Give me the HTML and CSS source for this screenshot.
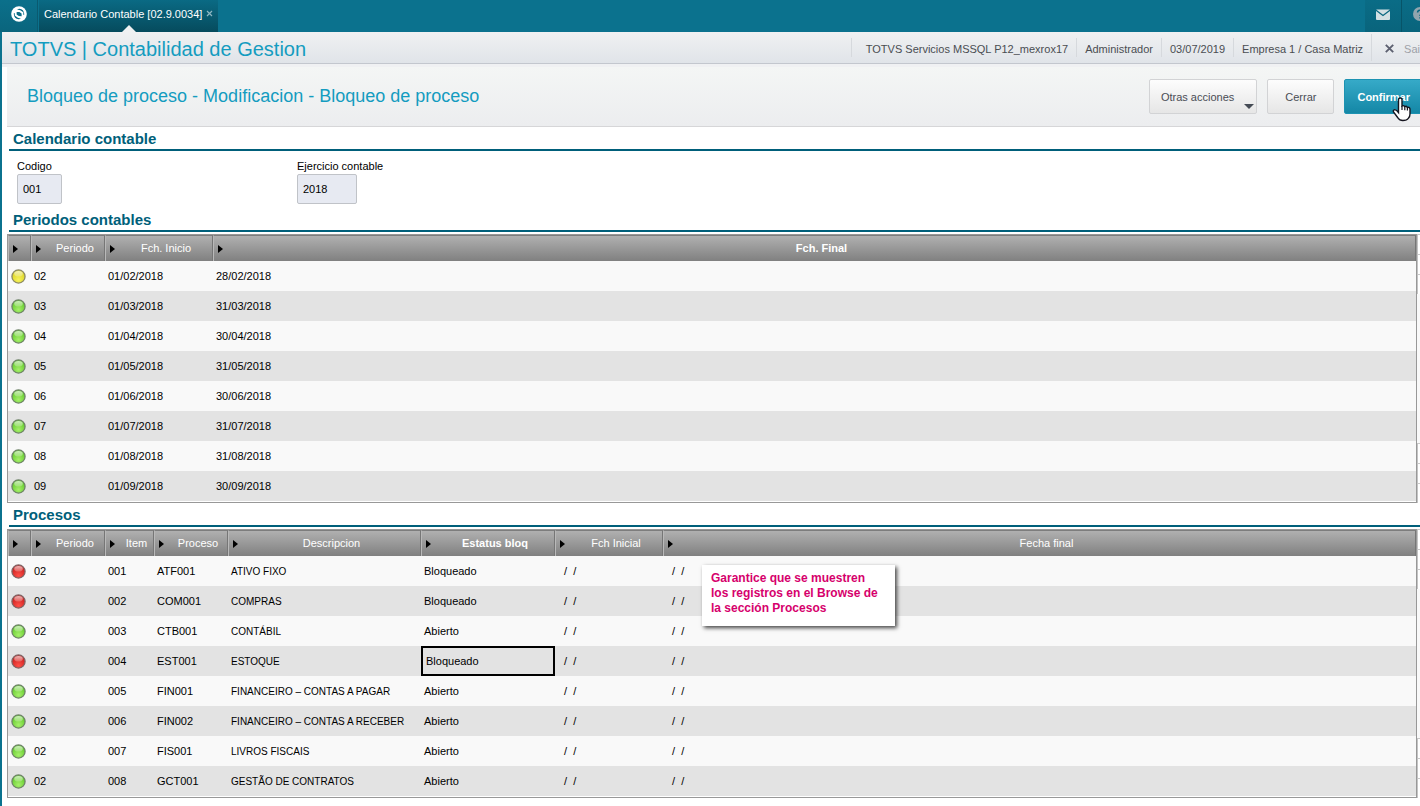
FILE: index.html
```html
<!DOCTYPE html>
<html lang="es">
<head>
<meta charset="utf-8">
<title>Calendario Contable</title>
<link rel="stylesheet" href="styles.css">
</head>
<body>
<svg class="defs" aria-hidden="true">
  <defs>
    <radialGradient id="g-green" cx="50%" cy="75%" r="70%"><stop offset="0" stop-color="#a6f06a"/><stop offset="1" stop-color="#5cc626"/></radialGradient>
    <radialGradient id="g-yellow" cx="50%" cy="75%" r="70%"><stop offset="0" stop-color="#f6f25c"/><stop offset="1" stop-color="#d8d01c"/></radialGradient>
    <radialGradient id="g-red" cx="50%" cy="80%" r="70%"><stop offset="0" stop-color="#ff5048"/><stop offset="1" stop-color="#c81c1c"/></radialGradient>
    <linearGradient id="g-shine" x1="0" y1="0" x2="0" y2="1"><stop offset="0" stop-color="#fff" stop-opacity=".7"/><stop offset="1" stop-color="#fff" stop-opacity=".2"/></linearGradient>
    <symbol id="green" viewBox="0 0 16 16"><circle cx="8" cy="8" r="7" fill="url(#g-green)" stroke="#6f8468" stroke-width="1.4"/><ellipse cx="8" cy="5" rx="4.6" ry="3" fill="url(#g-shine)"/></symbol>
    <symbol id="yellow" viewBox="0 0 16 16"><circle cx="8" cy="8" r="7" fill="url(#g-yellow)" stroke="#8c8a66" stroke-width="1.4"/><ellipse cx="8" cy="5" rx="4.6" ry="3" fill="url(#g-shine)"/></symbol>
    <symbol id="red" viewBox="0 0 16 16"><circle cx="8" cy="8" r="7" fill="url(#g-red)" stroke="#806464" stroke-width="1.4"/><ellipse cx="8" cy="5" rx="4.6" ry="3" fill="url(#g-shine)"/></symbol>
  </defs>
</svg>

<header class="topbar">
  <button class="home" aria-label="Inicio">
    <svg width="16" height="16" viewBox="0 0 16 16"><circle cx="8" cy="8" r="7.8" fill="#fff"/><path d="M8.200 2.700Q13 3 13.300 8.500L12.300 9V6.300L9.300 4.200 6 3.400ZM2.700 7.500 3.800 7V9.500L6.800 11.800 10 12.800 7.800 13.300Q3 13 2.700 7.500Z" fill="#0a6d87"/><path d="M5.600 5.900 8.400 6.100 10.600 7.600V10.200L7.800 10 5.600 8.500Z" fill="#0a6d87"/></svg>
  </button>
  <div class="tab"><span>Calendario Contable [02.9.0034]</span><button class="tab-close" aria-label="Cerrar pestaña"><svg width="7" height="7" viewBox="0 0 7 7"><path d="M1 1l5 5M6 1L1 6" stroke="#8fb6c2" stroke-width="1.2"/></svg></button></div>
  <div class="tools">
    <button class="tool" aria-label="Mensajes"><svg width="14" height="11" viewBox="0 0 14 11"><path d="M0 1.5Q0 .5 1 .5H13Q14 .5 14 1.5V10Q14 11 13 11H1Q0 11 0 10Z" fill="#d3dfe3"/><path d="M0 1.2 7 6.4 14 1.2" fill="none" stroke="#0a6780" stroke-width="1.3"/></svg></button>
    <button class="tool help" aria-label="Ayuda"><svg width="14" height="14" viewBox="0 0 14 14"><circle cx="7" cy="7" r="7" fill="#91a5ae"/><path d="M4.6 5.4a2.4 2.2 0 1 1 3.4 2Q7 7.8 7 9M7 10.2v1.4" fill="none" stroke="#0a6780" stroke-width="1.5"/></svg></button>
  </div>
</header>

<div class="page">
  <div class="infobar">
    <h1>TOTVS | Contabilidad de Gestion</h1>
    <ul class="session">
      <li class="server">TOTVS Servicios MSSQL P12_mexrox17</li>
      <li>Administrador</li>
      <li>03/07/2019</li>
      <li>Empresa 1 / Casa Matriz</li>
      <li class="exit"><button><svg width="9" height="9" viewBox="0 0 9 9"><path d="M.8.8l7.4 7.4M8.2.8L.8 8.2" stroke="#5d6070" stroke-width="1.9"/></svg>Sai</button></li>
    </ul>
  </div>

  <main>
    <div class="actionbar">
      <h2>Bloqueo de proceso - Modificacion - Bloqueo de proceso</h2>
      <div class="actions">
        <button class="btn more">Otras acciones<svg width="10" height="5" viewBox="0 0 10 5"><path d="M0 0H10L5 5Z" fill="#454b55"/></svg></button>
        <button class="btn">Cerrar</button>
        <button class="btn primary">Confirmar<svg class="cursor" width="20" height="26" viewBox="0 0 20 26"><path d="M6.5 15.5V3Q6.500 1 8.300 1T10 3V9Q11.500 8 12.800 9.600 14.300 8.800 15.300 10.400 18 9.900 18 12.500V17Q18 20 16.200 21.500 15 23.500 10.800 23.500 7.500 23.500 6 21L1.500 15Q.8 13 2.800 12.600 4.500 12.800 6.500 15.500Z" fill="#fff" stroke="#15151f" stroke-width="1.4"/><path d="M10 9v4M12.800 9.600v3.600M15.400 10.500v3" stroke="#15151f" stroke-width="1.2"/></svg></button>
      </div>
    </div>

    <section>
      <h3>Calendario contable</h3>
      <form class="fields">
        <div class="field"><label for="codigo">Codigo</label><input id="codigo" class="w-code" value="001" readonly></div>
        <div class="field"><label for="ejercicio">Ejercicio contable</label><input id="ejercicio" class="w-year" value="2018" readonly></div>
      </form>
    </section>

    <section>
      <h3>Periodos contables</h3>
      <div class="browse">
        <div class="frame">
          <table>
            <colgroup><col class="c-led"><col class="c-per"><col class="c-date"><col></colgroup>
            <thead><tr>
              <th><div class="head"></div></th><th><div class="head"><span>Periodo</span></div></th><th><div class="head"><span>Fch. Inicio</span></div></th><th><div class="head"><span class="strong">Fch. Final</span></div></th>
            </tr></thead>
            <tbody>
              <tr><td class="led"><svg><use href="#yellow"/></svg></td><td>02</td><td>01/02/2018</td><td>28/02/2018</td></tr>
              <tr><td class="led"><svg><use href="#green"/></svg></td><td>03</td><td>01/03/2018</td><td>31/03/2018</td></tr>
              <tr><td class="led"><svg><use href="#green"/></svg></td><td>04</td><td>01/04/2018</td><td>30/04/2018</td></tr>
              <tr><td class="led"><svg><use href="#green"/></svg></td><td>05</td><td>01/05/2018</td><td>31/05/2018</td></tr>
              <tr><td class="led"><svg><use href="#green"/></svg></td><td>06</td><td>01/06/2018</td><td>30/06/2018</td></tr>
              <tr><td class="led"><svg><use href="#green"/></svg></td><td>07</td><td>01/07/2018</td><td>31/07/2018</td></tr>
              <tr><td class="led"><svg><use href="#green"/></svg></td><td>08</td><td>01/08/2018</td><td>31/08/2018</td></tr>
              <tr><td class="led"><svg><use href="#green"/></svg></td><td>09</td><td>01/09/2018</td><td>30/09/2018</td></tr>
            </tbody>
          </table>
        </div>
        <div class="scroller"><i></i><i></i><i></i><b></b><i></i><i></i><i></i></div>
      </div>
    </section>

    <section>
      <h3>Procesos</h3>
      <div class="browse">
        <div class="frame">
          <table>
            <colgroup><col class="c-led"><col class="c-per"><col class="c-item"><col class="c-per"><col class="c-desc"><col class="c-stat"><col class="c-date"><col></colgroup>
            <thead><tr>
              <th><div class="head"></div></th><th><div class="head"><span>Periodo</span></div></th><th><div class="head"><span>Item</span></div></th><th><div class="head"><span>Proceso</span></div></th><th><div class="head"><span>Descripcion</span></div></th><th><div class="head"><span class="strong">Estatus bloq</span></div></th><th><div class="head"><span>Fch Inicial</span></div></th><th><div class="head"><span>Fecha final</span></div></th>
            </tr></thead>
            <tbody>
              <tr><td class="led"><svg><use href="#red"/></svg></td><td>02</td><td>001</td><td>ATF001</td><td class="desc">ATIVO FIXO</td><td>Bloqueado</td><td class="empty">/&nbsp; /</td><td class="empty">/&nbsp; /</td></tr>
              <tr><td class="led"><svg><use href="#red"/></svg></td><td>02</td><td>002</td><td>COM001</td><td class="desc">COMPRAS</td><td>Bloqueado</td><td class="empty">/&nbsp; /</td><td class="empty">/&nbsp; /</td></tr>
              <tr><td class="led"><svg><use href="#green"/></svg></td><td>02</td><td>003</td><td>CTB001</td><td class="desc">CONTÁBIL</td><td>Abierto</td><td class="empty">/&nbsp; /</td><td class="empty">/&nbsp; /</td></tr>
              <tr><td class="led"><svg><use href="#red"/></svg></td><td>02</td><td>004</td><td>EST001</td><td class="desc">ESTOQUE</td><td class="selected">Bloqueado</td><td class="empty">/&nbsp; /</td><td class="empty">/&nbsp; /</td></tr>
              <tr><td class="led"><svg><use href="#green"/></svg></td><td>02</td><td>005</td><td>FIN001</td><td class="desc">FINANCEIRO – CONTAS A PAGAR</td><td>Abierto</td><td class="empty">/&nbsp; /</td><td class="empty">/&nbsp; /</td></tr>
              <tr><td class="led"><svg><use href="#green"/></svg></td><td>02</td><td>006</td><td>FIN002</td><td class="desc">FINANCEIRO – CONTAS A RECEBER</td><td>Abierto</td><td class="empty">/&nbsp; /</td><td class="empty">/&nbsp; /</td></tr>
              <tr><td class="led"><svg><use href="#green"/></svg></td><td>02</td><td>007</td><td>FIS001</td><td class="desc">LIVROS FISCAIS</td><td>Abierto</td><td class="empty">/&nbsp; /</td><td class="empty">/&nbsp; /</td></tr>
              <tr><td class="led"><svg><use href="#green"/></svg></td><td>02</td><td>008</td><td>GCT001</td><td class="desc">GESTÃO DE CONTRATOS</td><td>Abierto</td><td class="empty">/&nbsp; /</td><td class="empty">/&nbsp; /</td></tr>
            </tbody>
          </table>
        </div>
        <div class="scroller"><i></i><i></i><i></i><b></b><i></i><i></i><i></i></div>
        <p class="callout">Garantice que se muestren<br>los registros en el Browse de<br>la sección Procesos</p>
      </div>
    </section>
  </main>
</div>
</body>
</html>
```
FILE: styles.css
```css
* { box-sizing: border-box; }

body {
  margin: 0;
  min-height: 100vh;
  display: flex;
  flex-direction: column;
  overflow: hidden;
  background: #0b728e;
  color: #000;
  font: 11px/14px "Liberation Sans", Arial, sans-serif;
}

button, input { font: inherit; color: inherit; }
button { margin: 0; padding: 0; border: 0; background: none; cursor: pointer; }
h1, h2, h3, p, ul { margin: 0; padding: 0; }
.defs { position: absolute; width: 0; height: 0; }

/* Top bar */
.topbar { display: flex; height: 32px; background: #0b728e; overflow: hidden; }
.home {
  width: 38px;
  padding-bottom: 4px;
  display: flex;
  align-items: center;
  justify-content: center;
  background: linear-gradient(#0b708b, #0a657d);
  border-right: 1px solid #0a5a70;
}
.tab {
  position: relative;
  display: flex;
  align-items: center;
  gap: 4px;
  margin-left: 1px;
  padding: 0 5px 4px;
  color: #fff;
  white-space: nowrap;
  background: linear-gradient(#0a6a84, #064b5d);
}
.tab::after {
  content: "";
  position: absolute;
  left: 50%;
  bottom: 0;
  margin-left: -7px;
  border: 7px solid transparent;
  border-top: 0;
  border-bottom-color: #f0f1f2;
}
.tab-close { display: flex; padding-bottom: 2px; }
.tools { display: flex; flex: none; margin-left: auto; margin-right: -19px; }
.tool {
  display: flex;
  align-items: center;
  justify-content: center;
  width: 37px;
  padding-bottom: 4px;
  background: linear-gradient(#0a6c86, #09647c);
  border-right: 1px solid #075468;
}

/* Page */
.page { flex: 1; margin-left: 2px; background: #fff; }
.infobar {
  display: flex;
  align-items: center;
  justify-content: space-between;
  height: 32px;
  padding-left: 8px;
  background: linear-gradient(#f0f1f2, #e0e4e9);
  border-bottom: 1px solid #c3c7ce;
  white-space: nowrap;
}
h1 { font-size: 20px; line-height: 24px; padding-top: 2px; font-weight: 400; color: #149cc0; }
.session { display: flex; align-items: center; height: 31px; list-style: none; color: #4a4d52; }
.session li { padding: 4px 8px 1px; border-left: 1px solid #d6d9dd; }
.session .server { padding-left: 14px; }
.session .exit { display: flex; align-items: center; height: 27px; padding: 2px 0 0 13px; }
.exit button { display: flex; align-items: center; gap: 10px; color: #9ea1a8; }

main { padding-left: 5px; background: linear-gradient(#f0f1f3 3px, #fff 3px); padding-top: 3px; }
.actionbar {
  display: flex;
  align-items: center;
  justify-content: space-between;
  height: 60px;
  margin-right: -3px;
  padding-left: 20px;
  background: linear-gradient(#f4f6f5, #ecedef);
  border-bottom: 1px solid #d6d6d8;
}
h2 { font-size: 18px; line-height: 22px; padding-bottom: 1px; font-weight: 400; color: #149cc0; white-space: nowrap; }
.actions { display: flex; gap: 10px; }
.btn {
  height: 35px;
  padding: 0 17px;
  border: 1px solid #d2d3d5;
  border-radius: 2px;
  background: linear-gradient(#fdfdfd, #e6e6e6);
  color: #4a4d55;
}
.btn.more { display: flex; align-items: center; gap: 10px; padding: 0 2px 0 11px; }
.btn.more svg { align-self: flex-end; margin-bottom: 4px; }
.btn.primary {
  position: relative;
  padding: 0 12px;
  border-color: #1d93b2;
  background: linear-gradient(#36aac8, #1487a6);
  color: #fff;
  font-weight: 700;
}
.cursor { position: absolute; left: 47px; top: 17px; }

/* Sections */
h3 {
  margin-left: 2px;
  padding: 3px 0 1px 4px;
  border-bottom: 2px solid #005f7a;
  color: #005f7a;
  font-size: 15px;
  line-height: 18px;
  font-weight: 700;
}
.fields { display: grid; grid-template-columns: 280px 1fr; padding: 8px 10px 4px; }
.field { display: flex; flex-direction: column; align-items: flex-start; gap: 1px; }
.field input {
  height: 30px;
  padding: 0 5px;
  border: 1px solid #c0c3c8;
  border-radius: 2px;
  background: #e7eaf2;
}
.field .w-code { width: 45px; }
.field .w-year { width: 60px; }

/* Browse grids */
.browse { position: relative; display: flex; margin-top: 2px; }
.frame { flex: 1; padding-bottom: 1px; border: 1px solid #989898; }
table { width: 100%; table-layout: fixed; border-collapse: separate; border-spacing: 0; }
.c-led { width: 23px; }
.c-per { width: 74px; }
.c-item { width: 49px; }
.c-date { width: 108px; }
.c-desc { width: 193px; }
.c-stat { width: 134px; }
th {
  height: 26px;
  padding: 0;
  border-top: 1px solid #7d7d7d;
  border-left: 1px solid #b9b9b9;
  border-right: 1px solid #767676;
  background: linear-gradient(#b0b0b0, #808080);
  color: #fff;
  font-weight: 400;
}
.head { display: flex; align-items: center; height: 25px; padding-left: 4px; }
.head::before { content: ""; border: 4px solid transparent; border-left: 5px solid #000; border-right: 0; }
.head span { flex: 1; padding: 0 0 2px 5px; text-align: center; }
.head .strong { font-weight: 700; }
td { height: 30px; padding: 0 3px; white-space: nowrap; }
tbody tr { background: #f9f9f9; }
tbody tr:nth-child(even) { background: #e3e3e3; }
.led svg { display: block; width: 15px; height: 15px; }
td.desc { padding-top: 1px; font-size: 10px; }
td.empty { padding-left: 9px; }
td.selected { padding-left: 5px; outline: 2px solid #000; outline-offset: -2px; }

.scroller { display: flex; flex-direction: column; width: 3px; background: #f9f9f9; }
.scroller i { height: 20px; border-left: 1px solid #c4c4c4; border-top: 1px solid #c8c8c8; background: #fff; }
.scroller b { flex: 1; }

.callout {
  position: absolute;
  left: 695px;
  top: 36px;
  padding: 6px 17px 10px 9px;
  background: #fff;
  box-shadow: 2px 2px 4px #444;
  color: #d6006c;
  font-size: 12px;
  line-height: 15px;
  font-weight: 700;
  white-space: nowrap;
}
```
